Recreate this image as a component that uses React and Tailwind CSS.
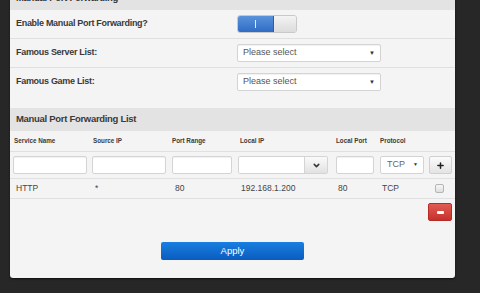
import { ChevronDown, Plus } from 'lucide-react'

const font = { fontFamily: '"Liberation Sans", Arial, sans-serif' }

function Select({ text, w }) {
  return (
    <div className={`${w} h-[18px] bg-white border border-[#d4d4d4] rounded-[2px] shadow-[inset_0_1px_1px_rgba(0,0,0,0.06)] flex items-center justify-between pl-[5px] pr-[5px]`}>
      <span className="text-[9px] text-[#555]">{text}</span>
      <span className="text-[6px] text-[#333]">▼</span>
    </div>
  )
}

function Input({ w }) {
  return <div className={`${w} h-[18px] bg-white border border-[#d4d4d4] rounded-[2px] shadow-[inset_0_1px_1px_rgba(0,0,0,0.06)]`}></div>
}

export default function App() {
  const cols = 'grid grid-cols-[79px_80px_66px_98px_44px_49px_23px] pl-[3px]'
  return (
    <div className="w-[480px] h-[293px] overflow-hidden bg-[#272727]" style={font}>
      <div className="ml-[10px] w-[445px] -mt-[13px] bg-[#f4f4f4] rounded-b-[3px] shadow-[0_1px_2px_rgba(0,0,0,0.6)]">
        <div className="h-[23px] bg-[#e3e3e3] flex items-center px-[6px] text-[9.5px] font-bold tracking-[-0.3px] text-[#333]">Manual Port Forwarding</div>

        <div className="h-[29px] border-b border-[#e0e0e0] flex items-center px-[6px]">
          <div className="w-[221px] text-[9px] font-bold tracking-[-0.3px] text-[#3a3a3a]">Enable Manual Port Forwarding?</div>
          <div className="flex h-[18px] w-[60px] rounded-[3px] overflow-hidden border border-[#c9c9c9]">
            <div className="w-[36px] bg-gradient-to-b from-[#5a93db] to-[#2f6cc4] flex items-center justify-center border-r border-[#2a5ea8]">
              <div className="w-[1px] h-[8px] bg-[#dfeaff]"></div>
            </div>
            <div className="flex-1 bg-gradient-to-b from-[#f3f3f3] to-[#dcdcdc]"></div>
          </div>
        </div>

        <div className="h-[29px] border-b border-[#e0e0e0] flex items-center px-[6px]">
          <div className="w-[221px] text-[9px] font-bold tracking-[-0.3px] text-[#3a3a3a]">Famous Server List:</div>
          <Select text="Please select" w="w-[144px]" />
        </div>

        <div className="h-[40px] flex items-start pt-[5px] px-[6px]">
          <div className="w-[221px] h-[18px] flex items-center text-[9px] font-bold tracking-[-0.3px] text-[#3a3a3a]">Famous Game List:</div>
          <Select text="Please select" w="w-[144px]" />
        </div>

        <div className="h-[23px] bg-[#e3e3e3] flex items-center px-[6px] text-[9.5px] font-bold tracking-[-0.3px] text-[#3a3a3a]">Manual Port Forwarding List</div>

        <div className={`${cols} h-[21px] border-b border-[#e0e0e0] items-center text-[6.3px] font-bold text-[#3a3a3a]`}>
          <span className="pl-[1px]">Service Name</span>
          <span className="pl-[1px]">Source IP</span>
          <span>Port Range</span>
          <span className="pl-[2px]">Local IP</span>
          <span>Local Port</span>
          <span>Protocol</span>
          <span></span>
        </div>

        <div className={`${cols} h-[27px] border-b border-[#e0e0e0] items-center`}>
          <Input w="w-[74px]" />
          <Input w="w-[74px]" />
          <Input w="w-[60px]" />
          <div className="w-[90px] h-[18px] flex border border-[#d4d4d4] rounded-[2px] overflow-hidden">
            <div className="flex-1 bg-white"></div>
            <div className="w-[23px] bg-gradient-to-b from-[#fafafa] to-[#e2e2e2] border-l border-[#d4d4d4] flex items-center justify-center">
              <ChevronDown className="w-[9px] h-[9px] text-[#333]" strokeWidth={4} />
            </div>
          </div>
          <Input w="w-[38px]" />
          <div className="w-[44px] h-[18px] bg-white border border-[#d4d4d4] rounded-[2px] flex items-center justify-between pl-[6px] pr-[5px]">
            <span className="text-[9px] text-[#666]">TCP</span>
            <span className="text-[5px] text-[#333]">▼</span>
          </div>
          <div className="w-[23px] h-[18px] rounded-[2px] border border-[#d0d0d0] bg-gradient-to-b from-[#fbfbfb] to-[#e4e4e4] flex items-center justify-center">
            <Plus className="w-[9px] h-[9px] text-[#222]" strokeWidth={4} />
          </div>
        </div>

        <div className={`${cols} h-[20px] border-b border-[#e0e0e0] items-center text-[8.5px] text-[#444]`}>
          <span className="pl-[3px]">HTTP</span>
          <span className="pl-[3px]">*</span>
          <span className="pl-[3px]">80</span>
          <span className="pl-[3px]">192.168.1.200</span>
          <span className="pl-[2px]">80</span>
          <span className="pl-[2px]">TCP</span>
          <span className="pl-[6px] flex"><span className="w-[9px] h-[9px] border border-[#b5b5b5] rounded-[2px] bg-gradient-to-b from-[#f7f7f7] to-[#dedede]"></span></span>
        </div>

        <div className="flex justify-end pt-[4px] pr-[3px]">
          <div className="w-[24px] h-[18px] rounded-[2px] bg-gradient-to-b from-[#e25b55] to-[#c5302b] border border-[#b52b27] flex items-center justify-center">
            <div className="w-[7px] h-[3px] bg-white rounded-[1px]"></div>
          </div>
        </div>

        <div className="flex justify-center pt-[21px] pb-[18px]">
          <div className="w-[143px] h-[18px] rounded-[2px] bg-gradient-to-b from-[#1a7fe0] to-[#0a5cbf] flex items-center justify-center text-[9.5px] text-white">Apply</div>
        </div>
      </div>
    </div>
  )
}
